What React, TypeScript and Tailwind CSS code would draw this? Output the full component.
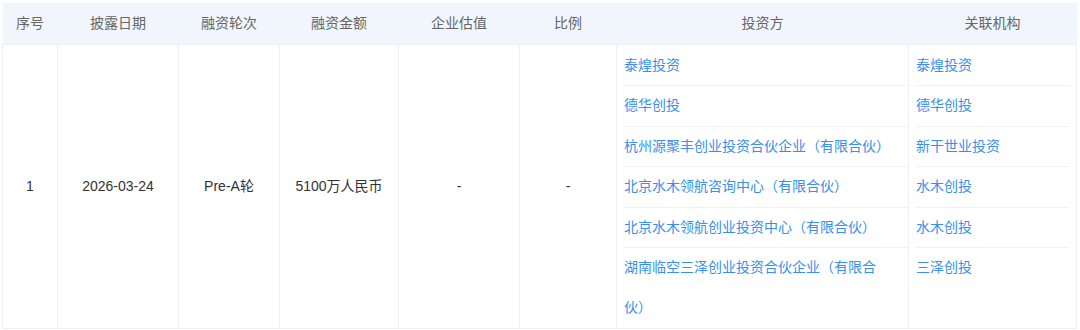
const headers = ['序号', '披露日期', '融资轮次', '融资金额', '企业估值', '比例', '投资方', '关联机构'];
const widths = ['w-[55px]', 'w-[121px]', 'w-[101px]', 'w-[119px]', 'w-[121px]', 'w-[97px]', 'w-[292px]', 'w-[168px]'];

const investors = [
  '泰煌投资',
  '德华创投',
  '杭州源聚丰创业投资合伙企业（有限合伙）',
  '北京水木领航咨询中心（有限合伙）',
  '北京水木领航创业投资中心（有限合伙）',
  '湖南临空三泽创业投资合伙企业（有限合伙）',
];

const related = ['泰煌投资', '德华创投', '新干世业投资', '水木创投', '水木创投', '三泽创投'];

const LinkList = ({ items, textWidth }: { items: string[]; textWidth: string }) => (
  <div className="flex flex-col">
    {items.map((name, i) => (
      <div
        key={i}
        className={`leading-[39.6px] text-[#3790ec] ${i < items.length - 1 ? 'border-b border-[#f0f1f3]' : ''}`}
      >
        <div className={textWidth}>{name}</div>
      </div>
    ))}
  </div>
);

export default function App() {
  const cells = ['1', '2026-03-24', 'Pre-A轮', '5100万人民币', '-', '-'];

  return (
    <div
      className="w-[1080px] h-[330px] bg-white pl-[2px] pt-[3px] text-[14px] overflow-hidden"
      style={{ fontFamily: '"Liberation Sans", "Noto Sans CJK SC", sans-serif' }}
    >
      <table className="table-fixed border-collapse w-[1074px]">
        <thead>
          <tr className="bg-[#f1f6fc] h-[41px]">
            {headers.map((h, i) => (
              <th key={h} className={`${widths[i]} font-normal text-[#666] text-center p-0`}>
                {h}
              </th>
            ))}
          </tr>
        </thead>
        <tbody>
          <tr className="align-middle">
            {cells.map((c, i) => (
              <td
                key={i}
                className="border border-[#eef0f2] text-center text-[#333] p-0 h-[284px]"
              >
                {c}
              </td>
            ))}
            <td className="border border-[#eef0f2] align-top pl-[7px] pr-0 pt-px">
              <LinkList items={investors} textWidth="max-w-[270px]" />
            </td>
            <td className="border border-[#eef0f2] align-top px-[7px] pt-px">
              <LinkList items={related} textWidth="w-full" />
            </td>
          </tr>
        </tbody>
      </table>
    </div>
  );
}
